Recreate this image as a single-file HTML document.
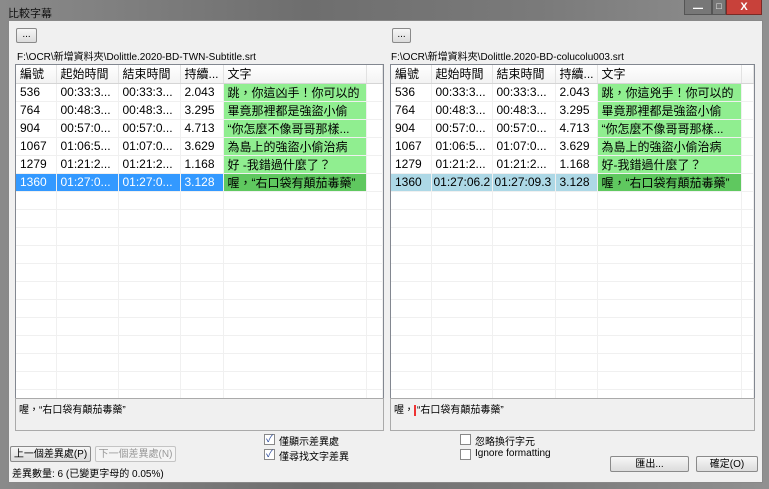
<!DOCTYPE html>
<html><head><meta charset="utf-8"><style>
*{box-sizing:border-box;margin:0;padding:0}
body{width:769px;height:489px;overflow:hidden;background:linear-gradient(90deg,#8a8a8a,#6e6e6e 40%,#7a7a7a 70%,#909090);font-family:"Liberation Sans","Noto Sans CJK TC",sans-serif;font-size:11px;color:#000;position:relative}
.abs{position:absolute}
.title{left:8px;top:5px;font-size:11px;color:#111}
.client{left:8px;top:20px;width:755px;height:463px;background:#f0f0f0;border:1px solid #888}
.btn{position:absolute;border:1px solid #8a8a8a;border-radius:2px;background:linear-gradient(#f6f6f6,#dcdcdc);font-size:10px;text-align:center;line-height:15px;color:#000}
.list{position:absolute;background:#fff;border:1px solid #828790;overflow:hidden}
table{border-collapse:collapse;font-size:12px;table-layout:fixed}
td,th{height:18px;border-right:1px solid #f0f0f0;border-bottom:1px solid #f0f0f0;padding:0 4px;white-space:nowrap;overflow:hidden;text-align:left;font-weight:normal}
th{background:linear-gradient(#fff,#f3f3f3);border-right:1px solid #e2e2e2;border-bottom:1px solid #d5d5d5}
.g{background:#90ee90}
.sel td{background:#3399ff;color:#fff}
.sel td.g{background:#5fc85f;color:#000}
.sel2 td{background:#add8e6}
.sel2 td.g{background:#5fc85f}
.sel td.e,.sel2 td.e{background:#fff}
.tb{position:absolute;background:#f0f0f0;border:1px solid #aaa;font-size:10px;padding:2px 3px}
.cb{position:absolute;width:11px;height:11px;border:1px solid #888;background:#fff;font-size:10px;line-height:9px;text-align:center;color:#2a4a9a}
.lbl{position:absolute;font-size:10px}
</style></head><body>
<div class="abs title">比較字幕</div>
<div class="abs" style="left:684px;top:0;width:28px;height:15px;background:#777;border:1px solid #555;border-top:0;color:#fff;text-align:center;font-size:10px;line-height:12px">▁</div>
<div class="abs" style="left:712px;top:0;width:14px;height:15px;background:#777;border:1px solid #555;border-top:0;color:#fff;text-align:center;font-size:9px;line-height:13px">□</div>
<div class="abs" style="left:726px;top:0;width:36px;height:15px;background:#c8413a;border:1px solid #7a2a25;border-top:0;color:#fff;text-align:center;font-size:11px;font-weight:bold;line-height:14px">X</div>
<div class="abs client"></div>

<div class="btn" style="left:16px;top:28px;width:21px;height:15px;line-height:12px">...</div>
<div class="btn" style="left:392px;top:28px;width:19px;height:15px;line-height:12px">...</div>
<div class="lbl" style="left:17px;top:48px">F:\OCR\新增資料夾\Dolittle.2020-BD-TWN-Subtitle.srt</div>
<div class="lbl" style="left:391px;top:48px">F:\OCR\新增資料夾\Dolittle.2020-BD-colucolu003.srt</div>

<div class="list" style="left:15px;top:64px;width:369px;height:335px">
<table style="width:367px"><colgroup><col style="width:40px"><col style="width:62px"><col style="width:62px"><col style="width:43px"><col style="width:143px"><col></colgroup>
<tr><th>編號</th><th>起始時間</th><th>結束時間</th><th>持續...</th><th>文字</th><th></th></tr>
<tr><td>536</td><td>00:33:3...</td><td>00:33:3...</td><td>2.043</td><td class="g">跳，你這凶手！你可以的</td><td></td></tr>
<tr><td>764</td><td>00:48:3...</td><td>00:48:3...</td><td>3.295</td><td class="g">畢竟那裡都是強盜小偷</td><td></td></tr>
<tr><td>904</td><td>00:57:0...</td><td>00:57:0...</td><td>4.713</td><td class="g">“你怎麼不像哥哥那樣...</td><td></td></tr>
<tr><td>1067</td><td>01:06:5...</td><td>01:07:0...</td><td>3.629</td><td class="g">為島上的強盜小偷治病</td><td></td></tr>
<tr><td>1279</td><td>01:21:2...</td><td>01:21:2...</td><td>1.168</td><td class="g">好 -我錯過什麼了？</td><td></td></tr>
<tr class="sel"><td>1360</td><td>01:27:0...</td><td>01:27:0...</td><td>3.128</td><td class="g">喔，“右口袋有顛茄毒藥”</td><td class="e"></td></tr>
<tr><td></td><td></td><td></td><td></td><td></td><td></td></tr><tr><td></td><td></td><td></td><td></td><td></td><td></td></tr><tr><td></td><td></td><td></td><td></td><td></td><td></td></tr><tr><td></td><td></td><td></td><td></td><td></td><td></td></tr><tr><td></td><td></td><td></td><td></td><td></td><td></td></tr><tr><td></td><td></td><td></td><td></td><td></td><td></td></tr><tr><td></td><td></td><td></td><td></td><td></td><td></td></tr><tr><td></td><td></td><td></td><td></td><td></td><td></td></tr><tr><td></td><td></td><td></td><td></td><td></td><td></td></tr><tr><td></td><td></td><td></td><td></td><td></td><td></td></tr><tr><td></td><td></td><td></td><td></td><td></td><td></td></tr><tr><td></td><td></td><td></td><td></td><td></td><td></td></tr>
</table></div>

<div class="list" style="left:390px;top:64px;width:365px;height:335px">
<table style="width:363px"><colgroup><col style="width:40px"><col style="width:61px"><col style="width:63px"><col style="width:42px"><col style="width:144px"><col></colgroup>
<tr><th>編號</th><th>起始時間</th><th>結束時間</th><th>持續...</th><th>文字</th><th></th></tr>
<tr><td>536</td><td>00:33:3...</td><td>00:33:3...</td><td>2.043</td><td class="g">跳，你這兇手！你可以的</td><td></td></tr>
<tr><td>764</td><td>00:48:3...</td><td>00:48:3...</td><td>3.295</td><td class="g">畢竟那裡都是強盜小偷</td><td></td></tr>
<tr><td>904</td><td>00:57:0...</td><td>00:57:0...</td><td>4.713</td><td class="g">“你怎麼不像哥哥那樣...</td><td></td></tr>
<tr><td>1067</td><td>01:06:5...</td><td>01:07:0...</td><td>3.629</td><td class="g">為島上的強盜小偷治病</td><td></td></tr>
<tr><td>1279</td><td>01:21:2...</td><td>01:21:2...</td><td>1.168</td><td class="g">好-我錯過什麼了？</td><td></td></tr>
<tr class="sel2"><td>1360</td><td style="padding:0 2px">01:27:06.2</td><td style="padding:0 2px">01:27:09.3</td><td>3.128</td><td class="g">喔，“右口袋有顛茄毒藥”</td><td class="e"></td></tr>
<tr><td></td><td></td><td></td><td></td><td></td><td></td></tr><tr><td></td><td></td><td></td><td></td><td></td><td></td></tr><tr><td></td><td></td><td></td><td></td><td></td><td></td></tr><tr><td></td><td></td><td></td><td></td><td></td><td></td></tr><tr><td></td><td></td><td></td><td></td><td></td><td></td></tr><tr><td></td><td></td><td></td><td></td><td></td><td></td></tr><tr><td></td><td></td><td></td><td></td><td></td><td></td></tr><tr><td></td><td></td><td></td><td></td><td></td><td></td></tr><tr><td></td><td></td><td></td><td></td><td></td><td></td></tr><tr><td></td><td></td><td></td><td></td><td></td><td></td></tr><tr><td></td><td></td><td></td><td></td><td></td><td></td></tr><tr><td></td><td></td><td></td><td></td><td></td><td></td></tr>
</table></div>

<div class="tb" style="left:15px;top:398px;width:369px;height:33px">喔，“右口袋有顛茄毒藥”</div>
<div class="tb" style="left:390px;top:398px;width:365px;height:33px">喔，<span style="display:inline-block;width:2px;height:11px;background:#e33;vertical-align:middle;margin-right:1px"></span>“右口袋有顛茄毒藥”</div>

<div class="btn" style="left:10px;top:446px;width:81px;height:16px">上一個差異處(P)</div>
<div class="btn" style="left:95px;top:446px;width:81px;height:16px;color:#999;border-color:#c4c4c4;background:#f4f4f4">下一個差異處(N)</div>
<div class="cb" style="left:264px;top:434px">✓</div><div class="lbl" style="left:279px;top:433px">僅顯示差異處</div>
<div class="cb" style="left:264px;top:449px">✓</div><div class="lbl" style="left:279px;top:448px">僅尋找文字差異</div>
<div class="cb" style="left:460px;top:434px"></div><div class="lbl" style="left:475px;top:433px">忽略換行字元</div>
<div class="cb" style="left:460px;top:449px"></div><div class="lbl" style="left:475px;top:448px">Ignore formatting</div>
<div class="btn" style="left:610px;top:456px;width:79px;height:16px">匯出...</div>
<div class="btn" style="left:696px;top:456px;width:62px;height:16px">確定(O)</div>
<div class="lbl" style="left:12px;top:465px">差異數量: 6 (已變更字母的 0.05%)</div>
</body></html>
